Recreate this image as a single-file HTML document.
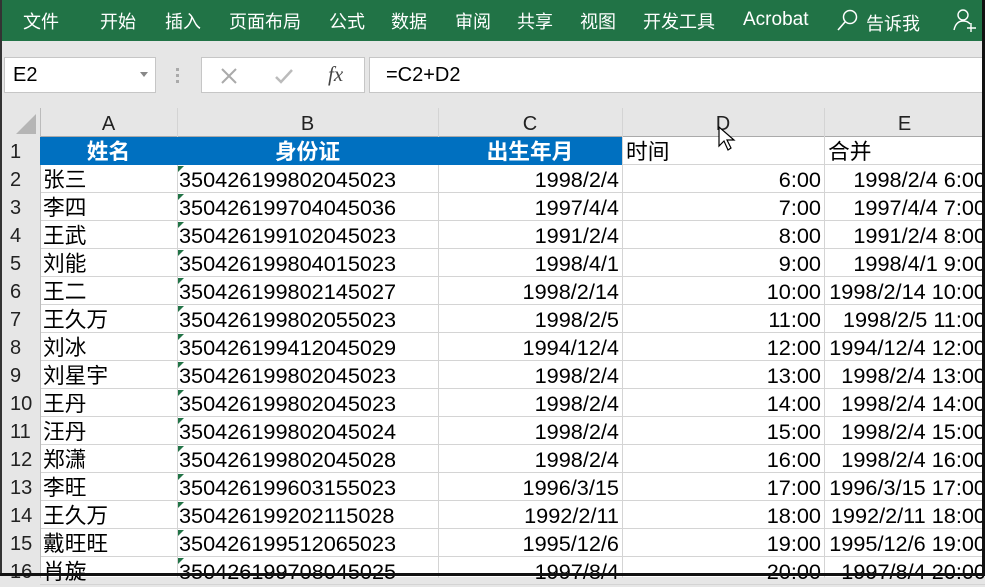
<!DOCTYPE html>
<html><head><meta charset="utf-8"><style>
*{margin:0;padding:0;box-sizing:border-box}
body{width:985px;height:576px;overflow:hidden;background:#e6e6e6;position:relative;font-family:"Liberation Sans","Noto Sans CJK SC",sans-serif}
.a{position:absolute}
#top{left:0;top:0;width:985px;height:41px;background:#217346;color:#fff;font-size:18px}
#top span{position:absolute;top:8px}
.box{position:absolute;background:#fff;border:1px solid #c6c6c6}
.cell{position:absolute;height:28px;line-height:30px;font-size:21.7px;color:#000;white-space:nowrap}
.hl{position:absolute;background:#d4d4d4}
.rh{position:absolute;left:2px;width:38px;height:28px;line-height:30px;font-size:20px;color:#222;text-align:left;padding-left:8px;background:#e6e6e6}
.tri{position:absolute;width:0;height:0;border-top:6px solid #217346;border-right:6px solid transparent}
</style></head><body>
<div id="top" class="a">
<span style="left:23px">文件</span><span style="left:100px">开始</span><span style="left:165px">插入</span><span style="left:229px">页面布局</span><span style="left:329px">公式</span><span style="left:391px">数据</span><span style="left:455px">审阅</span><span style="left:517px">共享</span><span style="left:580px">视图</span><span style="left:643px">开发工具</span><span style="left:743px;top:9px;font-size:19px">Acrobat</span>
<svg class="a" style="left:836px;top:8px" width="24" height="24"><circle cx="14" cy="9" r="6.5" fill="none" stroke="#fff" stroke-width="1.5"/><line x1="9" y1="14" x2="2" y2="22" stroke="#fff" stroke-width="1.6"/></svg>
<span style="left:866px;top:10px">告诉我</span>
<svg class="a" style="left:952px;top:8px" width="26" height="26"><circle cx="11" cy="7" r="5" fill="none" stroke="#fff" stroke-width="1.4"/><path d="M2 22 Q4 13 11 13 Q16 13 18 16" fill="none" stroke="#fff" stroke-width="1.4"/><path d="M19 15v9M15 20h9" stroke="#fff" stroke-width="1.4"/></svg>
</div>
<div class="a" style="left:0;top:0;width:2px;height:576px;background:#333"></div>
<div class="box" style="left:4px;top:57px;width:152px;height:36px"><span class="a" style="left:8px;top:6px;font-size:20px">E2</span><span class="a" style="left:135px;top:14px;border-top:5px solid #888;border-left:4px solid transparent;border-right:4px solid transparent"></span></div>
<div class="a" style="left:176px;top:68px;width:3px;height:3px;background:#aaa"></div><div class="a" style="left:176px;top:74px;width:3px;height:3px;background:#aaa"></div><div class="a" style="left:176px;top:80px;width:3px;height:3px;background:#aaa"></div>
<div class="box" style="left:201px;top:57px;width:164px;height:36px">
<svg class="a" style="left:18px;top:9px" width="18" height="18"><path d="M2 2L16 16M16 2L2 16" stroke="#aaa" stroke-width="2"/></svg>
<svg class="a" style="left:72px;top:9px" width="20" height="18"><path d="M2 10L7 15L18 3" fill="none" stroke="#bbb" stroke-width="2.5"/></svg>
<span class="a" style="left:126px;top:4px;font-family:'Liberation Serif',serif;font-style:italic;font-size:21px;color:#444">fx</span></div>
<div class="box" style="left:369px;top:57px;width:620px;height:36px"><span class="a" style="left:16px;top:6px;font-size:20px">=C2+D2</span></div>
<div class="a" style="left:40px;top:108px;width:945px;height:29px;background:#e6e6e6;font-size:20px;color:#222">
<span class="a" style="left:0;width:137px;text-align:center;top:5px">A</span>
<span class="a" style="left:137px;width:261px;text-align:center;top:5px">B</span>
<span class="a" style="left:398px;width:184px;text-align:center;top:5px">C</span>
<span class="a" style="left:582px;width:202px;text-align:center;top:5px">D</span>
<span class="a" style="left:784px;width:161px;text-align:center;top:5px">E</span>
</div>
<div class="a" style="left:16px;top:114px;width:0;height:0;border-bottom:20px solid #b5b5b5;border-left:20px solid transparent"></div>
<div class="a" style="left:40px;top:136px;width:945px;height:1px;background:#aaa"></div>
<div class="a" style="left:40px;top:137px;width:945px;height:440px;background:#fff"></div>
<div id="rows"></div>
<div class="a" style="left:40px;top:137px;width:582px;height:28px;background:#0070c0"></div>
<div class="cell" style="left:40px;top:137px;width:137px;text-align:center;color:#fff;font-weight:bold">姓名</div>
<div class="cell" style="left:177px;top:137px;width:261px;text-align:center;color:#fff;font-weight:bold">身份证</div>
<div class="cell" style="left:438px;top:137px;width:184px;text-align:center;color:#fff;font-weight:bold">出生年月</div>
<div class="cell" style="left:626px;top:137px">时间</div>
<div class="cell" style="left:828px;top:137px">合并</div>
<div class="a" style="left:982px;top:0;width:3px;height:576px;background:#111"></div>
<div class="a" style="left:0;top:573px;width:985px;height:3px;background:#111"></div>
<svg class="a" style="left:717px;top:126px" width="22" height="28"><path d="M2 1L2 20L7 15L11 24L14 22L10 14L17 14Z" fill="#fff" stroke="#000" stroke-width="1.2"/></svg>
<script>
var d=[["张三","350426199802045023","1998/2/4","6:00"],["李四","350426199704045036","1997/4/4","7:00"],["王武","350426199102045023","1991/2/4","8:00"],["刘能","350426199804015023","1998/4/1","9:00"],["王二","350426199802145027","1998/2/14","10:00"],["王久万","350426199802055023","1998/2/5","11:00"],["刘冰","350426199412045029","1994/12/4","12:00"],["刘星宇","350426199802045023","1998/2/4","13:00"],["王丹","350426199802045023","1998/2/4","14:00"],["汪丹","350426199802045024","1998/2/4","15:00"],["郑潇","350426199802045028","1998/2/4","16:00"],["李旺","350426199603155023","1996/3/15","17:00"],["王久万","350426199202115028","1992/2/11","18:00"],["戴旺旺","350426199512065023","1995/12/6","19:00"],["肖旋","350426199708045025","1997/8/4","20:00"]];
var h="";
var cols=[177,438,622,824];
for(var i=0;i<cols.length;i++)h+='<div class="hl" style="left:'+cols[i]+'px;top:108px;width:1px;height:470px"></div>';
for(var r=0;r<16;r++)h+='<div class="hl" style="left:40px;top:'+(164+r*28)+'px;width:945px;height:1px"></div>';
h+='<div class="hl" style="left:40px;top:108px;width:1px;height:470px;background:#bbb"></div>';
for(var r=0;r<16;r++)h+='<div class="rh" style="top:'+(137+r*28)+'px">'+(r+1)+'</div>';
for(var r=0;r<d.length;r++){var t=165+r*28,x=d[r];
h+='<div class="cell" style="left:43px;top:'+t+'px">'+x[0]+'</div>';
h+='<div class="tri" style="left:178px;top:'+(t+1)+'px"></div>';
h+='<div class="cell" style="left:179px;top:'+t+'px">'+x[1]+'</div>';
h+='<div class="cell" style="left:438px;top:'+t+'px;width:181px;text-align:right">'+x[2]+'</div>';
h+='<div class="cell" style="left:622px;top:'+t+'px;width:199px;text-align:right">'+x[3]+'</div>';
h+='<div class="cell" style="left:703px;top:'+t+'px;width:283px;text-align:right">'+x[2]+' '+x[3]+'</div>';}
document.getElementById("rows").innerHTML=h;
</script>
</body></html>
